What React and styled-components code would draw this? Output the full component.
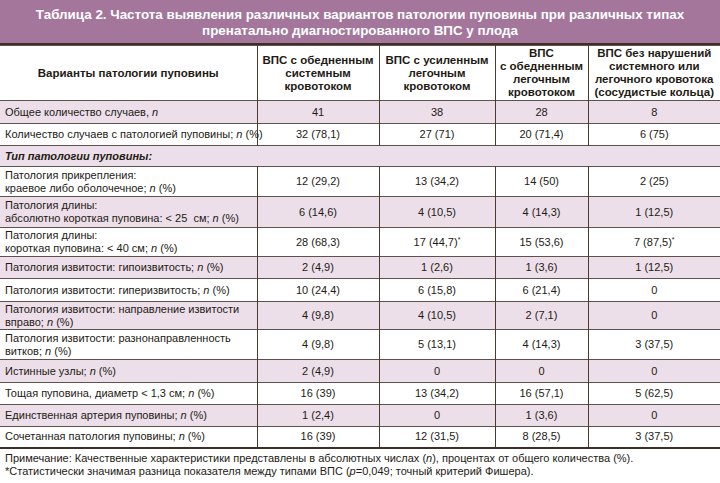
import React from "react"
import styled, { createGlobalStyle } from "styled-components"

const GlobalStyle = createGlobalStyle`
  html, body {
    margin: 0;
    padding: 0;
    background: #ffffff;
  }
  body {
    font-family: "Liberation Sans", Arial, sans-serif;
    color: #231a14;
  }
`

const Page = styled.div`
  width: 720px;
  height: 483px;
  overflow: hidden;
  background: #fff;
`

const Title = styled.div`
  background: #a4769c;
  color: #fff;
  font-weight: bold;
  font-size: 13.4px;
  line-height: 16px;
  text-align: center;
  padding: 7px 10px 0;
  height: 36px;
  border-bottom: 2px solid #3e2f26;
`

const Table = styled.table`
  width: 720px;
  border-collapse: collapse;
  table-layout: fixed;
  font-size: 11px;
  line-height: 13px;
  border-bottom: 2px solid #3e2f26;
`

const Row = styled.tr`
  height: ${(p) => p.$h}px;
  background: ${(p) => (p.$shade ? "#ecdfe9" : "#fff")};
  border-top: 1px solid #5f524b;
`

const HeadCell = styled.th`
  font-weight: bold;
  font-size: 11.5px;
  line-height: 13px;
  text-align: center;
  vertical-align: middle;
  padding: 0 2px;
  border-left: ${(p) => (p.$first ? "none" : "1px solid #4b3b2e")};
`

const Label = styled.td`
  text-align: left;
  vertical-align: middle;
  padding: 0 2px 0 5px;
  white-space: nowrap;
`

const Value = styled.td`
  text-align: center;
  vertical-align: middle;
  border-left: 1px solid #4b3b2e;
  padding: 0;
`

const Section = styled.td`
  font-weight: bold;
  font-style: italic;
  font-size: 11px;
  padding: 0 5px;
  vertical-align: middle;
`

const Star = styled.sup`
  font-size: 7px;
  line-height: 0;
  vertical-align: 4px;
`

const Notes = styled.div`
  font-size: 11px;
  line-height: 13px;
  padding: 3px 5px 0;
`

const rows = [
  { label: "Общее количество случаев, ", n: true, tail: "", vals: ["41", "38", "28", "8"], h: 23, shade: true },
  { label: "Количество случаев с патологией пуповины; ", n: true, tail: " (%)", vals: ["32 (78,1)", "27 (71)", "20 (71,4)", "6 (75)"], h: 22 },
  { section: "Тип патологии пуповины:", h: 21, shade: true },
  { label: ["Патология прикрепления:", "краевое либо оболочечное; "], n: true, tail: " (%)", vals: ["12 (29,2)", "13 (34,2)", "14 (50)", "2 (25)"], h: 30 },
  { label: ["Патология длины:", "абсолютно короткая пуповина: < 25\u00a0 см; "], n: true, tail: " (%)", vals: ["6 (14,6)", "4 (10,5)", "4 (14,3)", "1 (12,5)"], h: 31, shade: true },
  { label: ["Патология длины:", "короткая пуповина: < 40 см; "], n: true, tail: " (%)", vals: ["28 (68,3)", "17 (44,7)*", "15 (53,6)", "7 (87,5)*"], h: 29 },
  { label: "Патология извитости: гипоизвитость; ", n: true, tail: " (%)", vals: ["2 (4,9)", "1 (2,6)", "1 (3,6)", "1 (12,5)"], h: 22, shade: true },
  { label: "Патология извитости: гиперизвитость; ", n: true, tail: " (%)", vals: ["10 (24,4)", "6 (15,8)", "6 (21,4)", "0"], h: 23 },
  { label: ["Патология извитости: направление извитости", "вправо; "], n: true, tail: " (%)", vals: ["4 (9,8)", "4 (10,5)", "2 (7,1)", "0"], h: 28, shade: true },
  { label: ["Патология извитости: разнонаправленность", "витков; "], n: true, tail: " (%)", vals: ["4 (9,8)", "5 (13,1)", "4 (14,3)", "3 (37,5)"], h: 30 },
  { label: "Истинные узлы; ", n: true, tail: " (%)", vals: ["2 (4,9)", "0", "0", "0"], h: 23, shade: true },
  { label: "Тощая пуповина, диаметр < 1,3 см; ", n: true, tail: " (%)", vals: ["16 (39)", "13 (34,2)", "16 (57,1)", "5 (62,5)"], h: 22 },
  { label: "Единственная артерия пуповины; ", n: true, tail: " (%)", vals: ["1 (2,4)", "0", "1 (3,6)", "0"], h: 22, shade: true },
  { label: "Сочетанная патология пуповины; ", n: true, tail: " (%)", vals: ["16 (39)", "12 (31,5)", "8 (28,5)", "3 (37,5)"], h: 21 },
]

const renderValue = (v) =>
  v.endsWith("*") ? (
    <>
      {v.slice(0, -1)}
      <Star>*</Star>
    </>
  ) : (
    v
  )

const renderLabel = (r) => {
  const last = Array.isArray(r.label) ? r.label[r.label.length - 1] : r.label
  const end = (
    <>
      {last}
      {r.n && <i>n</i>}
      {r.tail}
    </>
  )
  if (!Array.isArray(r.label)) return end
  return (
    <>
      {r.label[0]}
      <br />
      {end}
    </>
  )
}

export default function App() {
  return (
    <Page>
      <GlobalStyle />
      <Title>
        Таблица 2. Частота выявления различных вариантов патологии пуповины при различных типах
        <br />
        пренатально диагностированного ВПС у плода
      </Title>
      <Table>
        <colgroup>
          <col style={{ width: 257 }} />
          <col style={{ width: 122 }} />
          <col style={{ width: 116 }} />
          <col style={{ width: 93 }} />
          <col style={{ width: 132 }} />
        </colgroup>
        <thead>
          <Row $h={55}>
            <HeadCell $first>Варианты патологии пуповины</HeadCell>
            <HeadCell>
              ВПС с обедненным
              <br />
              системным
              <br />
              кровотоком
            </HeadCell>
            <HeadCell>
              ВПС с усиленным
              <br />
              легочным
              <br />
              кровотоком
            </HeadCell>
            <HeadCell>
              ВПС
              <br />
              с обедненным
              <br />
              легочным
              <br />
              кровотоком
            </HeadCell>
            <HeadCell>
              ВПС без нарушений
              <br />
              системного или
              <br />
              легочного кровотока
              <br />
              (сосудистые кольца)
            </HeadCell>
          </Row>
        </thead>
        <tbody>
          {rows.map((r, i) =>
            r.section ? (
              <Row key={i} $h={r.h} $shade={r.shade}>
                <Section colSpan={5}>{r.section}</Section>
              </Row>
            ) : (
              <Row key={i} $h={r.h} $shade={r.shade}>
                <Label>{renderLabel(r)}</Label>
                {r.vals.map((v, j) => (
                  <Value key={j}>{renderValue(v)}</Value>
                ))}
              </Row>
            )
          )}
        </tbody>
      </Table>
      <Notes>
        Примечание: Качественные характеристики представлены в абсолютных числах (<i>n</i>), процентах от общего количества (%).
        <br />
        *Статистически значимая разница показателя между типами ВПС (<i>p</i>=0,049; точный критерий Фишера).
      </Notes>
    </Page>
  )
}
